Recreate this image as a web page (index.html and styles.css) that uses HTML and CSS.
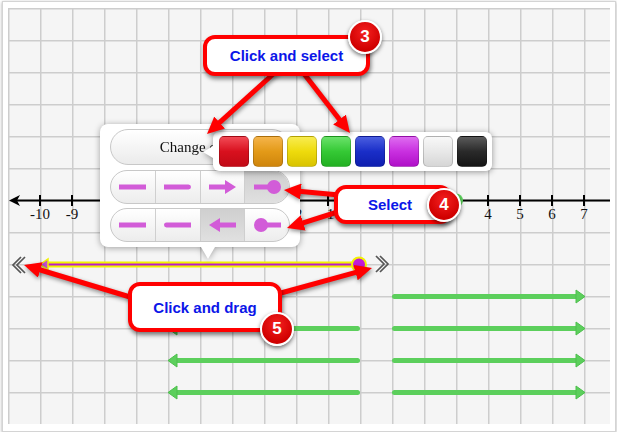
FILE: index.html
```html
<!DOCTYPE html>
<html>
<head>
  <title>Number line segments</title>
  <link rel="stylesheet" href="styles.css">
</head>
<body>
  <div class="frame">
    <div class="canvas">
      <!-- graph paper, number line and segments -->
      <svg class="graph" viewBox="8 8 602 416" width="602" height="416">
        <defs>
          <pattern id="grid" x="8" y="8" width="32" height="32" patternUnits="userSpaceOnUse">
            <path d="M0 .75H32M.75 0V32" stroke="#cdcdcd" stroke-width="1.5" fill="none"/>
          </pattern>
        </defs>
        <rect x="8" y="8" width="602" height="416" fill="#f5f5f5"/>
        <rect x="8" y="8" width="602" height="416" fill="url(#grid)"/>

        <line x1="16" y1="200.5" x2="610" y2="200.5" stroke="#000" stroke-width="2"/>
        <polygon points="9,200.5 20,195 17,200.5 20,206" fill="#000"/>
        <path d="M40 195V206M72 195V206M104 195V206M136 195V206M168 195V206M200 195V206M232 195V206M264 195V206M296 195V206M328 195V206M360 195V206M392 195V206M424 195V206M456 195V206M488 195V206M520 195V206M552 195V206M584 195V206" stroke="#000" stroke-width="2"/>
        <!-- labels -8..-3 and 0..3 sit under the popover and the callout -->
        <g class="ticks">
          <text x="40" y="219">-10</text>
          <text x="72" y="219">-9</text>
          <text x="296" y="219">-2</text>
          <text x="328" y="219">-1</text>
          <text x="488" y="219">4</text>
          <text x="520" y="219">5</text>
          <text x="552" y="219">6</text>
          <text x="584" y="219">7</text>
        </g>
        <circle cx="456" cy="200.5" r="7" fill="#5cd25c"/>

        <!-- selected segment -->
        <line x1="46" y1="264.5" x2="358" y2="264.5" stroke="#f2f200" stroke-width="6"/>
        <line x1="46" y1="264.5" x2="358" y2="264.5" stroke="#b81ccc" stroke-width="2"/>
        <polygon points="40,264.5 48,259 48,270" fill="#c24fd0" stroke="#f2f200" stroke-width="1.5"/>
        <circle cx="359" cy="264.5" r="7" fill="#c21ad8" stroke="#f2f200" stroke-width="2"/>

        <g fill="none" stroke="#555" stroke-width="1.7">
          <polyline points="21,257 13,265 21,273"/>
          <polyline points="25,257 17,265 25,273"/>
          <polyline points="376,256 384,264 376,272"/>
          <polyline points="380,256 388,264 380,272"/>
        </g>

        <!-- green rays -->
        <g class="ray" stroke-linecap="round">
          <line x1="394.5" y1="296.5" x2="578" y2="296.5"/>
          <line x1="394.5" y1="328.5" x2="578" y2="328.5"/>
          <line x1="394.5" y1="360.5" x2="578" y2="360.5"/>
          <line x1="394.5" y1="392.5" x2="578" y2="392.5"/>
          <line x1="175" y1="328.5" x2="357.5" y2="328.5"/>
          <line x1="175" y1="360.5" x2="357.5" y2="360.5"/>
          <line x1="175" y1="392.5" x2="357.5" y2="392.5"/>
        </g>
        <g fill="#5ccf5c" stroke="#4cbf4c" stroke-width="1">
          <polygon points="576,290 585,296.5 576,303"/>
          <polygon points="576,322 585,328.5 576,335"/>
          <polygon points="576,354 585,360.5 576,367"/>
          <polygon points="576,386 585,392.5 576,399"/>
          <polygon points="177,322 168,328.5 177,335"/>
          <polygon points="177,354 168,360.5 177,367"/>
          <polygon points="177,386 168,392.5 177,399"/>
        </g>
      </svg>

      <div class="popover">
        <div class="pill">Change color</div>
        <div class="seg-row">
          <span class="seg"><svg viewBox="0 0 27 14"><rect x="0" y="4.5" width="27" height="5"/></svg></span>
          <span class="seg"><svg viewBox="0 0 27 14"><path d="M0 4.5H24.5A2.5 2.5 0 0 1 24.5 9.5H0Z"/></svg></span>
          <span class="seg"><svg viewBox="0 0 27 14"><rect x="0" y="4.5" width="18" height="5"/><polygon points="16,0 27,7 16,14"/></svg></span>
          <span class="seg on"><svg viewBox="0 0 27 14"><rect x="0" y="4.5" width="15" height="5"/><circle cx="20" cy="7" r="7"/></svg></span>
        </div>
        <div class="seg-row">
          <span class="seg"><svg viewBox="0 0 27 14"><rect x="0" y="4.5" width="27" height="5"/></svg></span>
          <span class="seg"><svg viewBox="0 0 27 14"><path d="M27 4.5H2.5A2.5 2.5 0 0 0 2.5 9.5H27Z"/></svg></span>
          <span class="seg on"><svg viewBox="0 0 27 14"><polygon points="11,0 0,7 11,14"/><rect x="9" y="4.5" width="18" height="5"/></svg></span>
          <span class="seg"><svg viewBox="0 0 27 14"><circle cx="7" cy="7" r="7"/><rect x="12" y="4.5" width="15" height="5"/></svg></span>
        </div>
      </div>

      <div class="palette">
        <span class="swatch red"></span>
        <span class="swatch orange"></span>
        <span class="swatch yellow"></span>
        <span class="swatch green"></span>
        <span class="swatch blue"></span>
        <span class="swatch purple"></span>
        <span class="swatch white"></span>
        <span class="swatch black"></span>
      </div>

      <!-- annotation arrows -->
      <svg class="arrows" viewBox="8 8 602 416" width="602" height="416">
        <defs>
          <marker id="head" markerWidth="18" markerHeight="16" refX="5" refY="8" orient="auto" markerUnits="userSpaceOnUse">
            <path d="M0 0L17 8L0 16Z" fill="#f00"/>
          </marker>
        </defs>
        <g stroke="#f00" stroke-width="5" marker-end="url(#head)">
          <line x1="282" y1="66" x2="215.9" y2="125.9"/>
          <line x1="298" y1="66" x2="342.6" y2="123.5"/>
          <line x1="350" y1="196" x2="295.9" y2="191.1"/>
          <line x1="350" y1="208" x2="298.4" y2="224.4"/>
          <line x1="140" y1="300" x2="35.5" y2="268.5"/>
          <line x1="270" y1="296" x2="360.4" y2="271.2"/>
        </g>
      </svg>

      <div class="callout c3">Click and select</div>
      <div class="callout c4">Select</div>
      <div class="callout c5">Click and drag</div>

      <span class="badge b3">3</span>
      <span class="badge b4">4</span>
      <span class="badge b5">5</span>
    </div>
  </div>
</body>
</html>
```

FILE: styles.css
```css
/* Page frame */

body {
    margin: 0;
    background: #fff;
    font-family: "Liberation Sans", Arial, sans-serif;
}

.frame {
    box-sizing: border-box;
    width: 614px;
    height: 431px;
    margin: 1px 0 0 2px;
    padding: 6px 5px;
    border: 1px solid #d4d4d4;
    background: #fff;
    box-shadow: 0 1px 3px rgba(0, 0, 0, .35);
}

.canvas {
    position: relative;
    width: 602px;
    height: 416px;
    overflow: hidden;
}

.graph {
    display: block;
}

.ticks text {
    font-family: "Liberation Serif", "Times New Roman", serif;
    font-size: 15px;
    text-anchor: middle;
    fill: #111;
}

.ray line {
    stroke: #5ccf5c;
    stroke-width: 5;
}

/* Segment popover */

.popover {
    position: absolute;
    left: 92px;
    top: 116px;
    width: 200px;
    height: 123px;
    box-sizing: border-box;
    padding: 5px 10px;
    background: #fff;
    border-radius: 8px;
    filter: drop-shadow(0 1px 3px rgba(0, 0, 0, .35));
}

.popover:after {
    content: '';
    position: absolute;
    left: 101px;
    bottom: -12px;
    border-style: solid;
    border-width: 12px 7px 0 7px;
    border-color: #fff transparent transparent transparent;
}

.pill {
    height: 36px;
    box-sizing: border-box;
    border: 1px solid #c8c8c8;
    border-radius: 18px;
    background: linear-gradient(#fff, #ebebeb);
    display: flex;
    align-items: center;
    justify-content: center;
    font-family: "Liberation Serif", "Times New Roman", serif;
    font-size: 15px;
    color: #111;
    margin-bottom: 5px;
}

.seg-row {
    display: flex;
    height: 34px;
    box-sizing: border-box;
    border: 1px solid #c8c8c8;
    border-radius: 17px;
    overflow: hidden;
    background: linear-gradient(#fff, #ececec);
    margin-bottom: 4px;
}

.seg {
    flex: 1;
    display: flex;
    align-items: center;
    justify-content: center;
    border-left: 1px solid #cfcfcf;
}

.seg:first-child {
    border-left: 0;
}

.seg.on {
    background: linear-gradient(#cfcfcf, #e0e0e0);
}

.seg svg {
    width: 27px;
    height: 14px;
    fill: #d25cd8;
}

/* Colour palette */

.palette {
    position: absolute;
    left: 205px;
    top: 124px;
    display: flex;
    gap: 4px;
    padding: 4px 5px 4px 6px;
    background: #fff;
    border-radius: 6px;
    filter: drop-shadow(0 1px 3px rgba(0, 0, 0, .4));
}

.palette:before {
    content: '';
    position: absolute;
    left: -10px;
    top: 14px;
    border-style: solid;
    border-width: 6px 10px 6px 0;
    border-color: transparent #fff transparent transparent;
}

.swatch {
    width: 30px;
    height: 31px;
    box-sizing: border-box;
    border-radius: 5px;
    border: 1px solid rgba(0, 0, 0, .18);
}

.red { background: linear-gradient(#f24a55, #d8101e 50%, #c20a16); }
.orange { background: linear-gradient(#f5b44a, #e39a18 50%, #cf850c); }
.yellow { background: linear-gradient(#f8ec50, #eedb0c 50%, #d9c300); }
.green { background: linear-gradient(#6ae26a, #35c935 50%, #22b022); }
.blue { background: linear-gradient(#4a5ee0, #1a2ec8 50%, #0f1fb0); }
.purple { background: linear-gradient(#de6cf0, #c930e0 50%, #b010c8); }
.white { background: linear-gradient(#f8f8f8, #e8e8e8 50%, #d6d6d6); }
.black { background: linear-gradient(#5a5a5a, #2a2a2a 50%, #151515); }

/* Annotations */

.arrows {
    position: absolute;
    left: 0;
    top: 0;
    pointer-events: none;
    filter: drop-shadow(1px 2px 2px rgba(0, 0, 0, .45));
}

.callout {
    position: absolute;
    box-sizing: border-box;
    display: flex;
    align-items: center;
    justify-content: center;
    background: #fff;
    border: 4px solid #f00;
    border-radius: 12px;
    box-shadow: 1px 3px 4px rgba(0, 0, 0, .5);
    color: #0b16e8;
    font-weight: bold;
    font-size: 15px;
}

.c3 {
    left: 195px;
    top: 27px;
    width: 167px;
    height: 41px;
}

.c4 {
    left: 326px;
    top: 177px;
    width: 118px;
    height: 39px;
    padding-right: 6px;
}

.c5 {
    left: 120px;
    top: 274px;
    width: 154px;
    height: 50px;
}

.badge {
    position: absolute;
    width: 34px;
    height: 34px;
    box-sizing: border-box;
    border: 2px solid #fff;
    border-radius: 50%;
    background: radial-gradient(circle at 50% 35%, #f42020, #d00000 70%);
    box-shadow: 0 2px 4px rgba(0, 0, 0, .55);
    color: #fff;
    font-weight: bold;
    font-size: 17px;
    display: flex;
    align-items: center;
    justify-content: center;
}

.b3 { left: 340px; top: 12px; }
.b4 { left: 419px; top: 180px; }
.b5 { left: 252px; top: 304px; }
```
